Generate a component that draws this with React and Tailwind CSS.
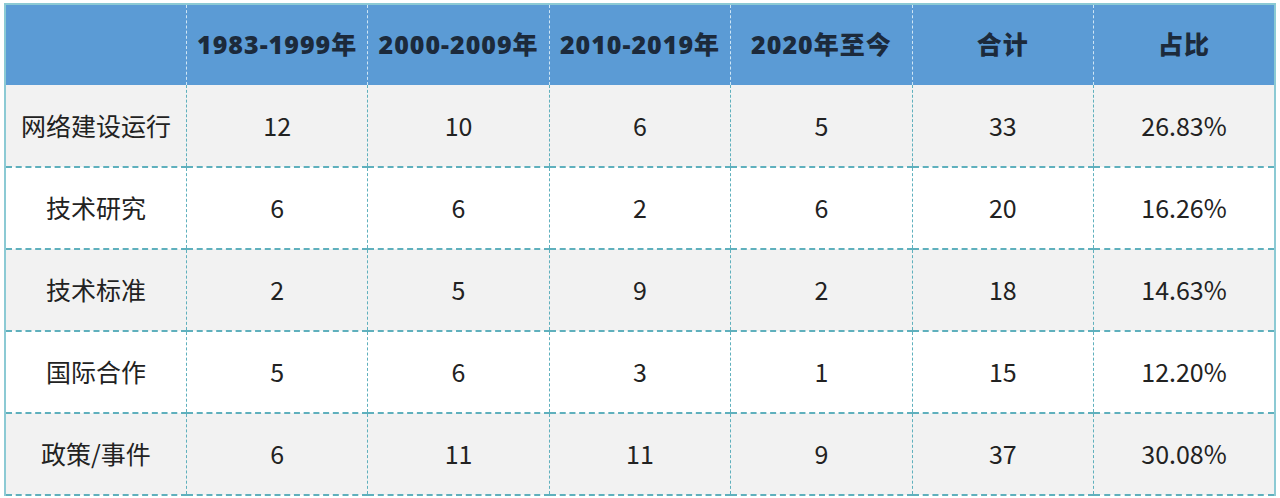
const headers = ["", "1983-1999年", "2000-2009年", "2010-2019年", "2020年至今", "合计", "占比"];

const rows = [
  ["网络建设运行", "12", "10", "6", "5", "33", "26.83%"],
  ["技术研究", "6", "6", "2", "6", "20", "16.26%"],
  ["技术标准", "2", "5", "9", "2", "18", "14.63%"],
  ["国际合作", "5", "6", "3", "1", "15", "12.20%"],
  ["政策/事件", "6", "11", "11", "9", "37", "30.08%"],
];

export default function App() {
  return (
    <div
      className="h-[498px] w-[1280px] bg-white pl-[4px] pt-[3px]"
      style={{ fontFamily: '"Noto Sans CJK SC", "Noto Sans", sans-serif' }}
    >
      <table className="w-[1272px] table-fixed border-collapse border-x-2 border-t-2 border-solid border-x-[#8ccad4] border-t-[#8ccad4]">
        <thead>
          <tr className="h-[81px] bg-[#5b9bd5]">
            {headers.map((h, i) => (
              <th
                key={i}
                className={`text-center font-['Open_Sans','Noto_Sans_CJK_SC',sans-serif] text-[25px] font-extrabold tracking-[1px] text-[#1c2a3b] ${
                  i > 0 ? "border-l border-dashed border-l-[#cfe6f5]" : ""
                }`}
              >
                {h}
              </th>
            ))}
          </tr>
        </thead>
        <tbody>
          {rows.map((r, ri) => (
            <tr
              key={ri}
              className={`h-[82px] ${ri % 2 === 0 ? "bg-[#f2f2f2]" : "bg-white"}`}
            >
              {r.map((c, ci) => (
                <td
                  key={ci}
                  className={`border-b-2 border-dashed border-b-[#5fb0bd] text-center text-[25px] text-[#222] ${
                    ci > 0 ? "border-l border-l-[#5fb0bd]" : ""
                  }`}
                >
                  {c}
                </td>
              ))}
            </tr>
          ))}
        </tbody>
      </table>
    </div>
  );
}
